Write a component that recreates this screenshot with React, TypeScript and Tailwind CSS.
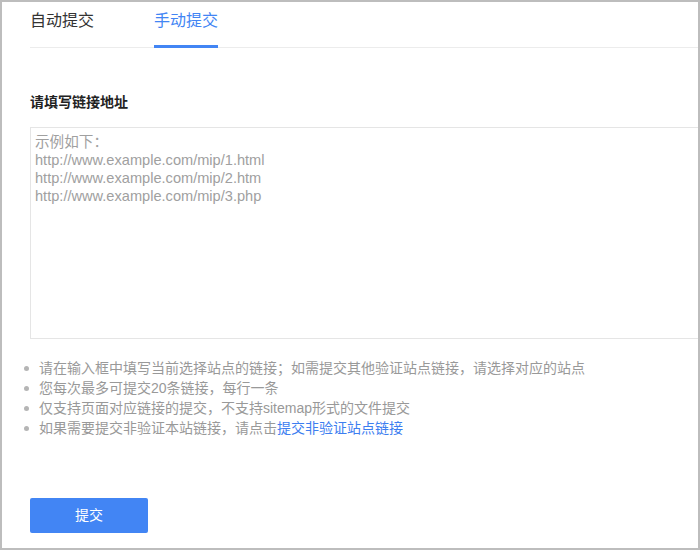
const tips = [
  '请在输入框中填写当前选择站点的链接；如需提交其他验证站点链接，请选择对应的站点',
  '您每次最多可提交20条链接，每行一条',
  '仅支持页面对应链接的提交，不支持sitemap形式的文件提交',
];

export default function App(): JSX.Element {
  return (
    <div
      className="box-border h-[550px] w-[700px] overflow-hidden border-2 border-[#bdbdbd] bg-white"
      style={{ fontFamily: '"Liberation Sans", "Noto Sans CJK SC", sans-serif' }}
    >
      <div className="ml-[28px] flex gap-[60px] border-b border-[#ececec]">
        <button type="button" className="-mb-px border-b-[3px] border-transparent pb-[12px] pt-[7px] text-[16px] leading-6 text-[#333]">
          自动提交
        </button>
        <button type="button" className="-mb-px border-b-[3px] border-[#4285f4] pb-[12px] pt-[7px] text-[16px] leading-6 text-[#4285f4]">
          手动提交
        </button>
      </div>

      <div className="pl-[28px]">
        <div className="mt-[44px] text-[14px] font-bold leading-5 text-[#222]">请填写链接地址</div>

        <textarea
          className="mt-[15px] box-border block h-[212px] w-[680px] resize-none border border-[#e5e5e5] px-[4px] pb-[3px] pt-[5px] text-[14.6px] leading-[18px] text-[#333] outline-none placeholder:text-[#a0a0a0]"
          placeholder={'示例如下：\nhttp://www.example.com/mip/1.html\nhttp://www.example.com/mip/2.htm\nhttp://www.example.com/mip/3.php'}
        />

        <ul className="mt-[19px] text-[14px] leading-5 text-[#999]">
          {tips.map((tip) => (
            <li key={tip} className="flex items-center">
              <span className="ml-[-6px] mr-[10px] h-[5px] w-[5px] rounded-full bg-[#b5b5b5]" />
              {tip}
            </li>
          ))}
          <li className="flex items-center">
            <span className="ml-[-6px] mr-[10px] h-[5px] w-[5px] rounded-full bg-[#b5b5b5]" />
            如果需要提交非验证本站链接，请点击
            <a className="text-[#3d7ef0]">提交非验证站点链接</a>
          </li>
        </ul>

        <button
          type="button"
          className="mt-[60px] h-[35px] w-[118px] rounded-[2px] bg-[#4285f4] text-[14px] text-white"
        >
          提交
        </button>
      </div>
    </div>
  );
}
